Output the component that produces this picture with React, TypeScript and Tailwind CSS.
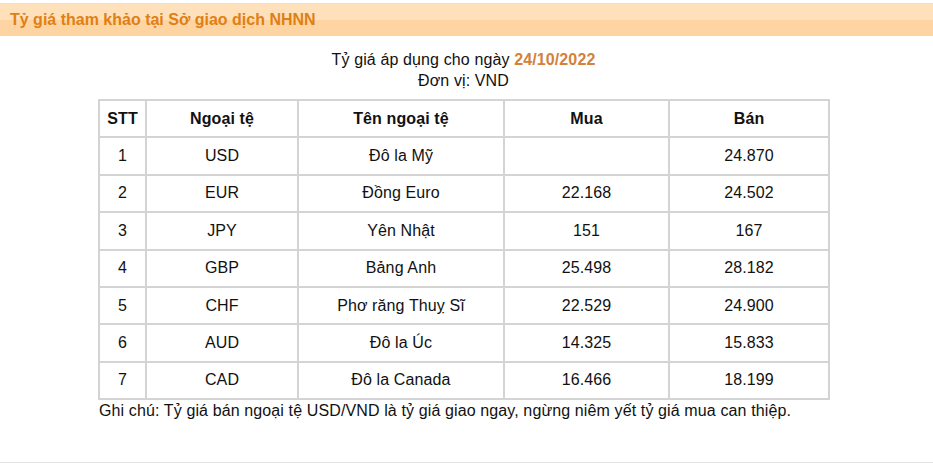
const rows = [
  { stt: 1, code: 'USD', name: 'Đô la Mỹ', buy: '', sell: '24.870' },
  { stt: 2, code: 'EUR', name: 'Đồng Euro', buy: '22.168', sell: '24.502' },
  { stt: 3, code: 'JPY', name: 'Yên Nhật', buy: '151', sell: '167' },
  { stt: 4, code: 'GBP', name: 'Bảng Anh', buy: '25.498', sell: '28.182' },
  { stt: 5, code: 'CHF', name: 'Phơ răng Thuỵ Sĩ', buy: '22.529', sell: '24.900' },
  { stt: 6, code: 'AUD', name: 'Đô la Úc', buy: '14.325', sell: '15.833' },
  { stt: 7, code: 'CAD', name: 'Đô la Canada', buy: '16.466', sell: '18.199' },
];

const cell = 'border border-[#d4d4d4] text-center align-middle h-[37.4px] p-0';

export default function App() {
  return (
    <div className="w-[933px] h-[463px] bg-white font-['Liberation_Sans',Arial,sans-serif] text-[16px] text-[#111] overflow-hidden">
      {/* Title bar */}
      <div className="mt-[3px] border-t border-[#e2e2e2] h-[33px] flex items-center pl-[10px] bg-[linear-gradient(to_bottom,#fee0bb_0%,#fee0bb_50%,#fed5a2_50%,#fed5a2_100%)]">
        <h2 className="text-[16px] font-bold text-[#e07f12] leading-none">Tỷ giá tham khảo tại Sở giao dịch NHNN</h2>
      </div>

      <div className="h-[427px] border-b border-[#e2e2e2] pt-[13px] tracking-[0.12px]">
        <div className="text-center leading-[21px] pr-[6px]">
          <p>
            Tỷ giá áp dụng cho ngày <b className="text-[#d2823a]">24/10/2022</b>
          </p>
          <p>Đơn vị: VND</p>
        </div>

        <table className="ml-[98px] mt-[8px] w-[730px] border-separate border-spacing-0 border border-[#d4d4d4] table-fixed">
          <colgroup>
            <col className="w-[47px]" />
            <col className="w-[152px]" />
            <col className="w-[206px]" />
            <col className="w-[165px]" />
            <col className="w-[160px]" />
          </colgroup>
          <thead>
            <tr className="font-bold">
              <th className={cell}>STT</th>
              <th className={cell}>Ngoại tệ</th>
              <th className={cell}>Tên ngoại tệ</th>
              <th className={cell}>Mua</th>
              <th className={cell}>Bán</th>
            </tr>
          </thead>
          <tbody>
            {rows.map((r) => (
              <tr key={r.stt}>
                <td className={cell}>{r.stt}</td>
                <td className={cell}>{r.code}</td>
                <td className={cell}>{r.name}</td>
                <td className={cell}>{r.buy}</td>
                <td className={cell}>{r.sell}</td>
              </tr>
            ))}
          </tbody>
        </table>

        <p className="ml-[99px] leading-[21px]">
          Ghi chú: Tỷ giá bán ngoại tệ USD/VND là tỷ giá giao ngay, ngừng niêm yết tỷ giá mua can thiệp.
        </p>
      </div>
    </div>
  );
}
